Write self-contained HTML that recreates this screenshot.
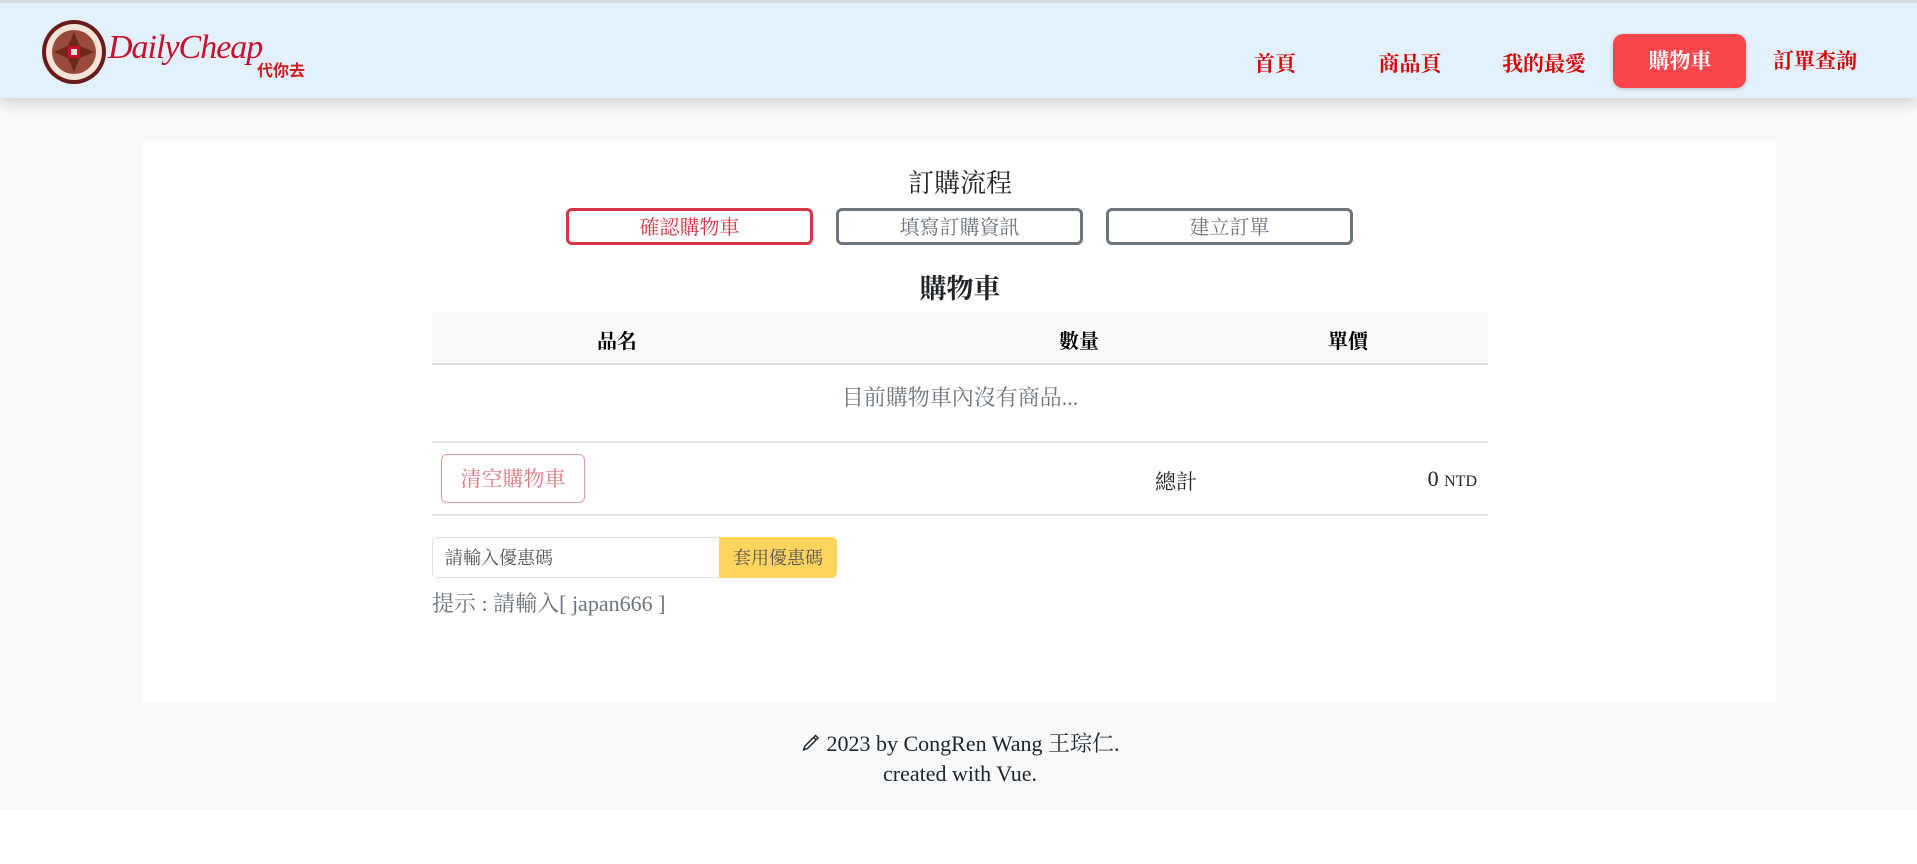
<!DOCTYPE html>
<html><head><meta charset="utf-8">
<style>
*{margin:0;padding:0;box-sizing:border-box}
body{width:1917px;height:864px;background:#fff;font-family:"Liberation Serif","Noto Serif CJK SC",serif;position:relative;overflow:hidden}
.abs{position:absolute}
.c{transform:translateX(-50%);white-space:nowrap}
#hdr{left:0;top:0;width:1917px;height:98px;background:#e3f1fc;border-top:3px solid #d5dbe0;box-shadow:0 4px 14px rgba(0,0,0,.18);z-index:2}
#bg{left:0;top:98px;width:1917px;height:713px;background:#f8f9fa}
#card{left:143px;top:141px;width:1633px;height:562px;background:#fff}
.nav{top:48px;font-size:21px;font-weight:bold;color:#d90000;line-height:26px}
.step{top:208px;width:247px;height:37px;border:3px solid #6c757d;border-radius:6px;font-size:20px;color:#6c757d;text-align:center;line-height:34px}
</style></head><body>
<div id="bg" class="abs"></div>
<div id="card" class="abs"></div>
<div id="hdr" class="abs">
  <svg class="abs" style="left:40px;top:15px" width="68" height="68" viewBox="0 0 68 68">
    <circle cx="34" cy="34" r="32" fill="#6b1a1a"/>
    <circle cx="34" cy="34" r="28" fill="#f3e3d8"/>
    <circle cx="34" cy="34" r="22" fill="#9a4a3a"/>
    <path d="M34 14 L40 28 L54 34 L40 40 L34 54 L28 40 L14 34 L28 28Z" fill="#6b2a1a"/>
    <rect x="28" y="28" width="12" height="12" fill="#c8102e"/>
    <rect x="31" y="31" width="6" height="6" fill="#f3e3d8"/>
  </svg>
  <div class="abs" style="left:108px;top:26px;font-family:'Liberation Serif',serif;font-style:italic;font-size:34px;color:#c8102e;letter-spacing:-1px">DailyCheap</div>
  <div class="abs" style="left:257px;top:54px;font-family:'Liberation Sans','Noto Sans CJK TC',sans-serif;font-weight:bold;font-size:16px;color:#d41a1a">代你去</div>
  <div class="abs nav c" style="left:1275px;top:48px">首頁</div>
  <div class="abs nav c" style="left:1410px;top:48px">商品頁</div>
  <div class="abs nav c" style="left:1544px;top:48px">我的最愛</div>
  <div class="abs" style="left:1613px;top:31px;width:133px;height:54px;background:#fa454c;border-radius:10px;box-shadow:0 1px 4px rgba(0,0,0,.2)"></div>
  <div class="abs nav c" style="left:1680px;top:45px;color:#fff">購物車</div>
  <div class="abs nav c" style="left:1815px;top:45px">訂單查詢</div>
</div>
<div class="abs c" style="left:960px;top:163px;font-size:26px;color:#212529">訂購流程</div>
<div class="abs step" style="left:566px;border-color:#d63545;color:#d63545">確認購物車</div>
<div class="abs step" style="left:836px">填寫訂購資訊</div>
<div class="abs step" style="left:1106px">建立訂單</div>
<div class="abs c" style="left:960px;top:267px;font-size:27px;font-weight:bold;color:#212529">購物車</div>
<div class="abs" style="left:432px;top:312px;width:1056px;height:53px;background:#f8f9fa;border-bottom:2px solid #dee2e6"></div>
<div class="abs c" style="left:617px;top:325px;font-size:20px;font-weight:bold">品名</div>
<div class="abs c" style="left:1079px;top:325px;font-size:20px;font-weight:bold">數量</div>
<div class="abs c" style="left:1348px;top:325px;font-size:20px;font-weight:bold">單價</div>
<div class="abs c" style="left:960px;top:381px;font-size:22px;color:#6c757d">目前購物車內沒有商品...</div>
<div class="abs" style="left:432px;top:441px;width:1056px;height:2px;background:#e2e5e8"></div>
<div class="abs" style="left:441px;top:454px;width:144px;height:49px;border:1.5px solid #e39aa2;border-radius:6px;color:#e07882;font-size:21px;text-align:center;line-height:48px">清空購物車</div>
<div class="abs c" style="left:1176px;top:466px;font-size:21px;color:#212529">總計</div>
<div class="abs" style="left:1360px;top:466px;width:117px;text-align:right;font-size:22px;color:#212529">0 <span style="font-size:16px">NTD</span></div>
<div class="abs" style="left:432px;top:514px;width:1056px;height:2px;background:#e2e5e8"></div>
<div class="abs" style="left:432px;top:537px;width:288px;height:41px;border:1px solid #dee2e6;border-radius:5px 0 0 5px;font-size:18px;color:#555;line-height:40px;padding-left:12px">請輸入優惠碼</div>
<div class="abs" style="left:719px;top:537px;width:118px;height:41px;background:#ffd55d;border-radius:0 5px 5px 0;font-size:18px;color:#555;line-height:42px;text-align:center">套用優惠碼</div>
<div class="abs" style="left:432px;top:587px;font-size:22px;color:#6c757d">提示 : 請輸入[ japan666 ]</div>
<div class="abs c" style="left:960px;top:727px;font-size:22px;color:#212529;display:flex;align-items:center">
<svg width="20" height="20" viewBox="0 0 16 16" style="margin-right:6px"><path d="M12 2l2 2-8.5 8.5-3 1 1-3z M10.5 3.5l2 2" fill="none" stroke="#212529" stroke-width="1.2"/></svg>2023 by CongRen Wang 王琮仁.</div>
<div class="abs c" style="left:960px;top:761px;font-size:22px;color:#212529">created with Vue.</div>
</body></html>
